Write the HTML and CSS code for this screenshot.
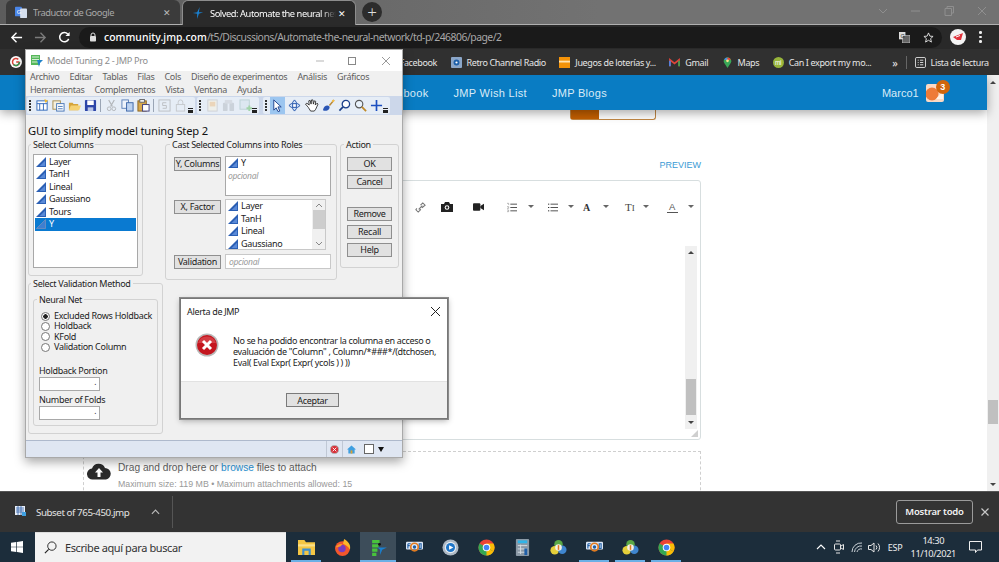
FILE: index.html
```html
<!DOCTYPE html>
<html lang="es">
<head>
<meta charset="utf-8">
<title>Solved: Automate the neural network</title>
<link rel="stylesheet" href="styles.css">
</head>
<body>
<svg class="defs" width="0" height="0" aria-hidden="true">
  <symbol id="col" viewBox="0 0 11 11"><path d="M0 11 L11 0 V11 Z" fill="#2b5fb4"/><path d="M4 10 L10 4 V10 Z" fill="#5a8ad8"/></symbol>
  <symbol id="colw" viewBox="0 0 11 11"><path d="M.5 10.5 L10.5 .5 V10.5 Z" fill="#3f7fd0" stroke="#6c8ebf"/></symbol>
  <symbol id="fsb" viewBox="0 0 18 18"><rect y="3" width="18" height="8" rx="1" fill="#dfe9f6"/><path d="M2 5 H5 M2 7 H4 M2 5 V10 M14 5 H16 V10 H14 Z" fill="none" stroke="#1e5fa8" stroke-width="1.2"/><circle cx="9" cy="8.5" r="4" fill="none" stroke="#e07b20" stroke-width="1.8"/><circle cx="9" cy="8.500" r="1.800" fill="#1e5fa8"/></symbol>
  <symbol id="mt4" viewBox="0 0 18 18"><circle cx="9" cy="5.5" r="4.5" fill="#5aa845"/><circle cx="5" cy="12" r="4.5" fill="#e4cf3a"/><circle cx="13" cy="11.5" r="4.5" fill="#3f86d0"/><circle cx="9" cy="9" r="3.5" fill="#f4f1e4"/><rect x="8.2" y="6.500" width="1.600" height="5" fill="#e07b20"/></symbol>
  <symbol id="chrome" viewBox="0 0 18 18"><circle cx="9" cy="9" r="8.5" fill="#ea4335"/><path d="M9 9 L16.4 13.2 A8.5 8.5 0 0 0 16.4 4.8 L9 4.8 Z" fill="#fbbc05"/><path d="M9 9 L16.4 13.2 A8.5 8.5 0 0 1 1.600 4.800 Z" fill="#34a853"/><path d="M9 9 L16.4 13.2 A8.5 8.5 0 0 1 9 17.5 Z" fill="#fbbc05"/><circle cx="9" cy="9" r="4" fill="#fff"/><circle cx="9" cy="9" r="3" fill="#4285f4"/></symbol>
</svg>
<div class="desktop">
  <div class="browser">
    <div class="tabstrip">
      <div class="tab tab-off">
        <svg class="ico14" viewBox="0 0 14 14"><rect x="0" y="1" width="8" height="11" rx="1" fill="#4a86e8"/><rect x="6" y="3" width="8" height="11" rx="1" fill="#d5dfee"/><text x="2" y="9" font-size="7" fill="#fff" font-family="Liberation Sans">G</text></svg>
        <span class="tab-title">Traductor de Google</span><span class="tab-x">✕</span>
      </div>
      <div class="tab tab-on">
        <svg class="ico14" viewBox="0 0 14 14"><path d="M1 7 L6 6 L9 0 L8 6 L13 6 L8 8 L6 14 L6 8 Z" fill="#1a80d0"/></svg>
        <span class="tab-title tab-fade">Solved: Automate the neural netw</span><span class="tab-x tab-x-on">✕</span>
      </div>
      <div class="newtab">+</div>
      <div class="winbtns">
        <svg width="12" height="12" viewBox="0 0 12 12"><path d="M2 4 L6 8 L10 4" fill="none" stroke="#8f8f8f"/></svg>
        <svg width="12" height="12" viewBox="0 0 12 12"><path d="M1 6 H10" stroke="#8f8f8f"/></svg>
        <svg width="12" height="12" viewBox="0 0 12 12"><path d="M2 3.5 H8.5 V10.5 H2 Z M4 3 V1.5 H10.5 V8 H9" fill="none" stroke="#8f8f8f"/></svg>
        <svg width="12" height="12" viewBox="0 0 12 12"><path d="M2 2 L10 10 M10 2 L2 10" stroke="#8f8f8f"/></svg>
      </div>
    </div>
    <div class="toolbar">
      <svg class="nav-ico" viewBox="0 0 14 14"><path d="M13 7 H2 M7 2 L2 7 L7 12" fill="none" stroke="#fff" stroke-width="1.5"/></svg>
      <svg class="nav-ico" viewBox="0 0 14 14"><path d="M1 7 H12 M7 2 L12 7 L7 12" fill="none" stroke="#7b7b7b" stroke-width="1.5"/></svg>
      <svg class="nav-ico" viewBox="0 0 14 14"><path d="M11.5 8.5 A5 5 0 1 1 10.5 3.2" fill="none" stroke="#fff" stroke-width="1.6"/><path d="M12.5 1 V5.5 H8 Z" fill="#fff"/></svg>
      <div class="omnibox">
        <svg class="lock" viewBox="0 0 8 10"><path d="M2 4 V3 A2 2 0 0 1 6 3 V4" fill="none" stroke="#ddd"/><rect x="1" y="4" width="6" height="5.5" rx=".8" fill="#ddd"/></svg>
        <span class="url"><b>community.jmp.com</b>/t5/Discussions/Automate-the-neural-network/td-p/246806/page/2</span>
        <svg class="omni-ico" viewBox="0 0 12 12"><rect x="0" y="0" width="7" height="8" fill="#ddd"/><rect x="4" y="4" width="8" height="8" fill="#666" stroke="#ddd" stroke-width=".6"/><text x="1.5" y="6.5" font-size="6" fill="#333" font-family="Liberation Sans">G</text></svg>
        <svg class="omni-ico omni-star" viewBox="0 0 12 12"><path d="M6 1 L7.5 4.5 L11 4.8 L8.3 7.2 L9.2 11 L6 9 L2.8 11 L3.7 7.2 L1 4.8 L4.5 4.5 Z" fill="none" stroke="#e6e6e6"/></svg>
      </div>
      <svg class="avatar" viewBox="0 0 16 16"><circle cx="8" cy="8" r="8" fill="#f4f4f4"/><path d="M3 8 L13 4 L11 11 L7 11 Z" fill="#e0313a"/><path d="M6 8 L10 6.5" stroke="#fff"/></svg>
      <div class="kebab"><i></i><i></i><i></i></div>
    </div>
    <div class="bookmarks">
      <svg class="bm-g" viewBox="0 0 12 12"><circle cx="6" cy="6" r="6" fill="#fff"/><path d="M9.5 6 H6.2 M9.5 6 A3.5 3.5 0 1 1 8.3 3.4" fill="none" stroke="#d8443a" stroke-width="1.5"/><path d="M9.5 6 A3.5 3.5 0 0 1 3.5 8.5" fill="none" stroke="#2f9e55" stroke-width="1.5"/></svg>
      <span class="bm bm-first">Facebook</span>
      <span class="bm bm-item"><svg class="bm-ico" viewBox="0 0 12 12"><rect width="12" height="12" rx="1" fill="#8ba6c8"/><circle cx="6" cy="6" r="3.2" fill="#1d5fa8"/><circle cx="6" cy="6" r="1.2" fill="#fff"/></svg>Retro Channel Radio</span>
      <span class="bm bm-item"><svg class="bm-ico" viewBox="0 0 12 12"><rect width="12" height="12" fill="#f39208"/><rect y="4" width="12" height="2" fill="#ffe3b0"/></svg>Juegos de loterías y...</span>
      <span class="bm bm-item"><svg class="bm-ico" viewBox="0 0 12 10"><path d="M1 9 V2 L6 6 L11 2 V9" fill="none" stroke="#e0443a" stroke-width="1.8"/><path d="M1 9 V3" stroke="#4a86e8" stroke-width="1.8"/><path d="M11 9 V3" stroke="#38a853" stroke-width="1.8"/></svg>Gmail</span>
      <span class="bm bm-item"><svg class="bm-ico" viewBox="0 0 10 13"><path d="M5 13 L1.2 7 A4.4 4.4 0 1 1 8.8 7 Z" fill="#3aa757"/><path d="M1 3 A4.4 4.4 0 0 1 5 .5 L5 4 Z" fill="#4a86e8"/><path d="M9 3 A4.4 4.4 0 0 0 5 .5 L5 4 Z" fill="#ea4335"/><circle cx="5" cy="4.5" r="1.6" fill="#fbe18d"/></svg>Maps</span>
      <span class="bm bm-item"><svg class="bm-ico" viewBox="0 0 12 12"><circle cx="6" cy="6" r="6" fill="#97b43a"/><text x="2.3" y="8.5" font-size="7" fill="#fff" font-family="Liberation Sans">mi</text></svg>Can I export my mo...</span>
      <span class="bm bm-more">»</span>
      <span class="bm-sep"></span>
      <span class="bm bm-read"><svg class="bm-ico" viewBox="0 0 12 12"><rect x=".5" y=".5" width="11" height="11" rx="1.5" fill="none" stroke="#e3e3e3"/><path d="M3 3.5 H4 M5.5 3.5 H9 M3 6 H4 M5.5 6 H9 M3 8.5 H4 M5.5 8.5 H9" stroke="#e3e3e3"/></svg>Lista de lectura</span>
    </div>
    <div class="page">
      <div class="pagemain">
        <nav class="sitenav">
          <span class="nav-link nav-first">Notebook</span>
          <span class="nav-link">JMP Wish List</span>
          <span class="nav-link">JMP Blogs</span>
          <span class="nav-user">Marco1</span>
          <span class="nav-avatar">
            <svg width="18" height="18" viewBox="0 0 18 18"><rect width="18" height="18" rx="2" fill="#fbd9c4"/><circle cx="6" cy="10" r="6.5" fill="#ee7b38"/><path d="M10 15 L17 7 V15 Z" fill="#fff3e8"/></svg>
            <span class="badge">3</span>
          </span>
        </nav>
        <div class="content">
          <div class="cta"><span class="cta-a"></span><span class="cta-b"></span></div>
          <div class="preview">PREVIEW</div>
          <div class="editor">
            <div class="editor-tools">
              <svg class="ed" viewBox="0 0 12 12"><path d="M2 7 L1 8.5 L3.5 11 L6 8.5 L5 7.5 M7 5 L8 6 L11 3.5 L8.5 1 L6 3.5 M4 8 L8 4" fill="none" stroke="#777" stroke-width="1.2"/></svg>
              <svg class="ed ed-cam" viewBox="0 0 12 10"><path d="M0 2 H3 L4 0 H8 L9 2 H12 V10 H0 Z" fill="#222"/><circle cx="6" cy="5.5" r="2.3" fill="#fff"/><circle cx="6" cy="5.5" r="1.2" fill="#222"/></svg>
              <svg class="ed ed-vid" viewBox="0 0 12 8"><rect width="8" height="8" rx="1" fill="#222"/><path d="M8 3 L12 .5 V7.5 L8 5 Z" fill="#222"/></svg>
              <svg class="ed ed-ol" viewBox="0 0 12 12"><path d="M4 2 H12 M4 6 H12 M4 10 H12" stroke="#555" stroke-width="1.2"/><path d="M0 1 H2 V3 M0 5 H2 V7 H0 M0 9 H2 V11 H0" fill="none" stroke="#888" stroke-width=".7"/></svg><i class="caret caret-ol"></i>
              <svg class="ed ed-ul" viewBox="0 0 12 12"><path d="M3 2 H12 M3 6 H12 M3 10 H12" stroke="#555" stroke-width="1.2"/><path d="M0 2 H1.5 M0 6 H1.5 M0 10 H1.5" stroke="#333" stroke-width="1.2"/></svg><i class="caret caret-ul"></i>
              <span class="ed-a">A</span><i class="caret caret-a"></i>
              <span class="ed-t">T<small>I</small></span><i class="caret caret-t"></i>
              <span class="ed-c">A</span><i class="caret caret-c"></i>
            </div>
            <div class="ed-scroll"><i class="up"></i><span class="ed-thumb"></span><i class="down"></i></div>
            <svg class="grip" viewBox="0 0 7 7"><path d="M0 7 L7 0 V7 Z" fill="#cfcfcf"/></svg>
          </div>
          <div class="drop">
            <svg class="cloud" viewBox="0 0 24 18"><path d="M6 17.5 A5.5 5.5 0 0 1 5 6.5 A7 7 0 0 1 18 6 A5.8 5.8 0 0 1 19 17.5 Z" fill="#2b2b2b"/><path d="M12 6 L16 10.5 H13.5 V15 H10.5 V10.5 H8 Z" fill="#fff"/></svg>
            <div>
              <div class="drop-main">Drag and drop here or <span class="link">browse</span> files to attach</div>
              <div class="drop-sub">Maximum size: 119 MB • Maximum attachments allowed: 15</div>
            </div>
          </div>
        </div>
      </div>
      <div class="pagescroll"><i class="up"></i><span class="page-thumb"></span><i class="down"></i></div>
    </div>
    <div class="downloads">
      <svg class="dl-ico" viewBox="0 0 11 10"><rect width="10" height="9" fill="#e8eef8"/><path d="M1 2 H9 M1 4 H9 M1 6 H9 M3 0 V9 M6 0 V9" stroke="#3060a8" stroke-width=".8"/><rect x="7" y="6" width="4" height="4" fill="#3f9fe0"/></svg>
      <span class="dl-name">Subset of 765-450.jmp</span>
      <svg class="dl-chev" viewBox="0 0 10 6"><path d="M1 5 L5 1 L9 5" fill="none" stroke="#bbb" stroke-width="1.3"/></svg>
      <span class="dl-sep"></span>
      <span class="dl-all">Mostrar todo</span>
      <svg class="dl-x" viewBox="0 0 8 8"><path d="M.5 .5 L7.5 7.5 M7.5 .5 L.5 7.5" stroke="#c8c8c8" stroke-width="1.2"/></svg>
    </div>
  </div>

  <div class="taskbar">
    <svg class="start" viewBox="0 0 12 12"><path d="M0 1.8 L5.3 1 V5.7 H0 Z M6 .9 L12 0 V5.7 H6 Z M0 6.3 H5.3 V11 L0 10.2 Z M6 6.3 H12 V12 L6 11.1 Z" fill="#fff"/></svg>
    <div class="search">
      <svg class="mag" viewBox="0 0 14 14"><circle cx="8.5" cy="5.5" r="4.5" fill="none" stroke="#222"/><path d="M5 9 L1 13" stroke="#222" stroke-width="1.3"/></svg>
      <span>Escribe aquí para buscar</span>
    </div>
    <div class="tb-apps">
      <span class="app app-on-line"><svg viewBox="0 0 16 16"><path d="M0 1 H6 L7.5 3 H16 V15 H0 Z" fill="#f4c644"/><path d="M0 5 H16 V7 H0 Z" fill="#fbe08a"/><path d="M4 9 H12 V15 H10 V11 H6 V15 H4 Z" fill="#3d8fd0"/></svg></span>
      <span class="app"><svg viewBox="0 0 16 16"><circle cx="8" cy="9" r="7" fill="#f3572c"/><path d="M9.500 0 C14 2.500 16 6 15 10 C13.500 7 11 5.500 8.500 4.500 Z" fill="#fcb72a"/><circle cx="7.500" cy="9" r="3.500" fill="#7a3cc0"/><path d="M1.500 8 C3 5 6 4 8 5 L6 7 Z" fill="#f89a2c"/></svg></span>
      <span class="app app-active"><svg viewBox="0 0 16 16"><path d="M2 1 H9 V4 H2 Z M2 5 H8 V8 H2 Z M2 9 H7 V12 H2 Z M2 13 H6 V16 H2 Z" fill="#48c33c"/><circle cx="9" cy="5" r="1.300" fill="#111"/><path d="M7 8 H16 L11.500 10 L9.500 15 L9.500 10 Z" fill="#1a80d0"/></svg></span>
      <span class="app"><svg><use href="#fsb"/></svg></span>
      <span class="app"><svg viewBox="0 0 18 18"><circle cx="9" cy="9" r="8.5" fill="#aeb9c4"/><circle cx="9" cy="9" r="6" fill="#e8edf2"/><circle cx="9" cy="9" r="4.800" fill="#1f76c8"/><path d="M7.500 6.500 L12 9 L7.500 11.500 Z" fill="#fff"/></svg></span>
      <span class="app"><svg><use href="#chrome"/></svg></span>
      <span class="app"><svg viewBox="0 0 14 18"><rect width="14" height="18" rx="1" fill="#8a99a6"/><rect x="2" y="1.5" width="10" height="3" fill="#2fb4e8"/><path d="M2 7 H12 M2 10.5 H12 M2 14 H12 M5 6 V16" stroke="#d5dde4"/><rect x="9" y="10" width="3" height="7" fill="#1e5fa8"/></svg></span>
      <span class="app"><svg><use href="#mt4"/></svg></span>
      <span class="app app-on-line"><svg><use href="#fsb"/></svg></span>
      <span class="app app-on-line"><svg><use href="#mt4"/></svg></span>
      <span class="app app-on-line"><svg><use href="#chrome"/></svg></span>
    </div>
    <div class="tray">
      <svg class="tr-up" width="10" height="6" viewBox="0 0 10 6"><path d="M1 5 L5 1 L9 5" fill="none" stroke="#fff" stroke-width="1.1"/></svg>
      <svg class="tr-meet" width="10" height="14" viewBox="0 0 10 14"><rect x=".5" y="4" width="6" height="6" rx="1" fill="none" stroke="#e6e6e6"/><path d="M7 6 L9.5 4.5 V9.5 L7 8 M2 1 H6 M2 13 H6" fill="none" stroke="#e6e6e6"/></svg>
      <svg class="tr-wifi" width="12" height="11" viewBox="0 0 12 11"><path d="M1 10 A9 9 0 0 1 11 1 M3.5 10 A6.5 6.5 0 0 1 11 4 M6 10 A4 4 0 0 1 11 7" fill="none" stroke="#c9d0d6"/></svg>
      <svg class="tr-vol" width="12" height="11" viewBox="0 0 12 11"><path d="M.5 3.5 H3 L6 1 V10 L3 7.5 H.5 Z M8 3.5 A3 3 0 0 1 8 7.5 M10 1.5 A6 6 0 0 1 10 9.5" fill="none" stroke="#e6e6e6"/></svg>
      <span class="esp">ESP</span>
      <span class="clock"><span>14:30</span><span>11/10/2021</span></span>
      <svg class="notif" width="13" height="12" viewBox="0 0 13 12"><path d="M.5 .5 H12.5 V9 H8.5 L6.5 11.5 L6.5 9 H.5 Z" fill="none" stroke="#f0f0f0"/></svg>
    </div>
  </div>

  <section class="jmp">
    <header class="jmp-title">
      <svg class="jmp-logo" viewBox="0 0 13 13"><rect x="1" y="1" width="9" height="10" fill="#56b85a"/><path d="M2 3 H9 M2 5.5 H9 M2 8 H9" stroke="#d6f0d6"/><path d="M7 6 H13 L10 9 L9 13 Z" fill="#2183c9"/></svg>
      <span class="jmp-name">Model Tuning 2 - JMP Pro</span>
      <svg class="jw jw-min" viewBox="0 0 10 10"><path d="M1 5 H9" stroke="#b5b5b5"/></svg>
      <svg class="jw jw-max" viewBox="0 0 10 10"><rect x="1.5" y="1.5" width="7" height="7" fill="none" stroke="#888"/></svg>
      <svg class="jw jw-x" viewBox="0 0 10 10"><path d="M1 1 L9 9 M9 1 L1 9" stroke="#999"/></svg>
    </header>
    <div class="jmp-menu">
      <div class="menu-row"><span>Archivo</span><span>Editar</span><span>Tablas</span><span>Filas</span><span>Cols</span><span>Diseño de experimentos</span><span>Análisis</span><span>Gráficos</span></div>
      <div class="menu-row"><span>Herramientas</span><span>Complementos</span><span>Vista</span><span>Ventana</span><span>Ayuda</span></div>
    </div>
    <div class="jmp-tools">
      <div class="tgroup tg1">
        <i class="tgrip"></i>
        <svg class="ti" viewBox="0 0 14 14"><rect x="1" y="2" width="11" height="10" fill="#fff" stroke="#2f66b8"/><path d="M1 5 H12 M4 5 V12 M8 5 V12" stroke="#2f66b8"/><path d="M9 0 L13 2 L10 4 Z" fill="#f1b92c"/></svg>
        <svg class="ti" viewBox="0 0 14 14"><rect x="1" y="2" width="8" height="9" fill="#f5f0df" stroke="#a58b4d"/><rect x="5" y="5" width="8" height="8" fill="#fff" stroke="#4373b5"/><path d="M6.5 8 H11.5 M6.5 10.5 H11.5" stroke="#4373b5"/></svg>
        <svg class="ti" viewBox="0 0 14 14"><path d="M1 4 H5 L6 5.5 H11 V12 H1 Z" fill="#d5a43a"/><path d="M3 7 H14 L12 12 H1 Z" fill="#f5d274"/></svg>
        <svg class="ti" viewBox="0 0 14 14"><rect x="1" y="1" width="12" height="12" rx="1" fill="#2c45a8"/><rect x="3.5" y="1.5" width="7" height="5" fill="#fff"/><rect x="4" y="9" width="6" height="4" fill="#b8c4e6"/></svg>
        <i class="tsep"></i>
        <svg class="ti ti-dim" viewBox="0 0 14 14"><path d="M4 1 L8 8 M10 1 L6 8" stroke="#888" stroke-width="1.3"/><circle cx="4.5" cy="10.5" r="2" fill="none" stroke="#888"/><circle cx="9.5" cy="10.5" r="2" fill="none" stroke="#888"/></svg>
        <svg class="ti" viewBox="0 0 14 14"><rect x="1" y="1" width="7" height="9" fill="#eef3fb" stroke="#5a7fb8"/><rect x="6" y="4" width="7" height="9" fill="#bcd2f0" stroke="#3a65a8"/></svg>
        <svg class="ti" viewBox="0 0 14 14"><rect x="1" y="2" width="9" height="11" fill="#d9a94c" stroke="#8a6420"/><rect x="3" y="0.5" width="5" height="3" fill="#eee" stroke="#666"/><rect x="6" y="6" width="7" height="7" fill="#fff" stroke="#3a3a7a"/></svg>
        <i class="tsep"></i>
        <svg class="ti ti-dim" viewBox="0 0 14 14"><rect x="1" y="1" width="12" height="12" fill="none" stroke="#999"/><path d="M9 4 H5 V7 H9 V10 H5" fill="none" stroke="#999"/></svg>
        <svg class="ti ti-dim" viewBox="0 0 14 14"><rect x="2.5" y="6" width="9" height="7" fill="none" stroke="#aaa"/><path d="M4.5 6 V3.5 A2.5 2.5 0 0 1 9.5 3.5 V6" fill="none" stroke="#aaa"/></svg>
        <i class="tmore"></i>
      </div>
      <div class="tgroup tg2">
        <i class="tgrip"></i>
        <svg class="ti ti-dim" viewBox="0 0 14 14"><rect x="2" y="1" width="10" height="12" fill="#f6f2e2" stroke="#bbb"/><rect x="4" y="3" width="6" height="5" fill="#f0c38a"/></svg>
        <svg class="ti ti-dim" viewBox="0 0 14 14"><rect x="1" y="4" width="5" height="9" rx="1" fill="#b6bcc4"/><rect x="8" y="4" width="5" height="9" rx="1" fill="#b6bcc4"/><rect x="3" y="1" width="8" height="4" fill="#c9ced4"/></svg>
        <svg class="ti ti-dim ti-wide" viewBox="0 0 16 14"><rect x="1" y="1" width="10" height="10" fill="#d5e3ee" stroke="#9bb"/><path d="M11 7 V13 M8 10 H14" stroke="#6cc06c" stroke-width="2"/></svg>
        <i class="tmore"></i>
      </div>
      <div class="tgroup tg3">
        <i class="tgrip"></i>
        <span class="ti-sel"><svg class="ti" viewBox="0 0 14 14"><path d="M3 1 L11 8.5 H7.5 L9.5 13 L7.5 13.5 L5.5 9.5 L3 12 Z" fill="#fff" stroke="#1c3f8a"/></svg></span>
        <svg class="ti" viewBox="0 0 14 14"><path d="M7 1 L9 3.5 V5 H10.5 L13 7 L10.5 9 H9 V10.5 L7 13 L5 10.5 V9 H3.5 L1 7 L3.5 5 H5 V3.5 Z" fill="#cfe0f8" stroke="#1c4fa8"/><path d="M5 5 H9 V9 H5 Z" fill="#fff" stroke="#1c4fa8"/></svg>
        <svg class="ti ti-hand" viewBox="0 0 16 14"><path d="M4 9 L1 5.5 L2.5 4.5 L5 6.5 L4.5 2 L6 1.5 L7 5.5 L7.5 1 L9 1 L9.5 5.5 L10.5 2 L12 2.5 L11.5 6.5 L13.5 4.5 L14.5 5.5 L12 11 L10.5 13 H6.5 Z" fill="#fff" stroke="#222" stroke-width=".9"/></svg>
        <svg class="ti" viewBox="0 0 14 14"><path d="M1 12 C2 7 6 6 8 8 C9 11 5 14 1 12 Z" fill="#2a55b4"/><path d="M8 7 L13 1" stroke="#b98a3a" stroke-width="1.6"/><circle cx="12" cy="2" r="1.3" fill="#f5c04a"/></svg>
        <svg class="ti" viewBox="0 0 14 14"><circle cx="8.5" cy="5.5" r="4" fill="#fff" stroke="#1c3f8a" stroke-width="1.4"/><path d="M5.5 8.5 L1.5 12.5" stroke="#1c3f8a" stroke-width="1.8"/></svg>
        <svg class="ti" viewBox="0 0 14 14"><circle cx="5.5" cy="5.5" r="4" fill="#e9f2fb" stroke="#555" stroke-width="1.2"/><path d="M8.5 8.5 L13 13" stroke="#c08a2a" stroke-width="2"/></svg>
        <svg class="ti" viewBox="0 0 14 14"><path d="M7 1 V13 M1 7 H13" stroke="#1c4fc0" stroke-width="1.8"/></svg>
        <i class="tmore"></i>
      </div>
    </div>
    <div class="jmp-body">
      <h2 class="jmp-h">GUI to simplify model tuning Step 2</h2>
      <div class="jmp-top">
        <fieldset class="grp grp-sel">
          <legend>Select Columns</legend>
          <ul class="list list-sel">
            <li><svg class="c"><use href="#col"/></svg>Layer</li>
            <li><svg class="c"><use href="#col"/></svg>TanH</li>
            <li><svg class="c"><use href="#col"/></svg>Lineal</li>
            <li><svg class="c"><use href="#col"/></svg>Gaussiano</li>
            <li><svg class="c"><use href="#col"/></svg>Tours</li>
            <li class="on"><svg class="c"><use href="#colw"/></svg>Y</li>
          </ul>
        </fieldset>
        <fieldset class="grp grp-cast">
          <legend>Cast Selected Columns into Roles</legend>
          <div class="cast-row">
            <span class="btn btn-role">Y, Columns</span>
            <ul class="list list-y">
              <li><svg class="c"><use href="#col"/></svg>Y</li>
              <li class="opt">opcional</li>
            </ul>
          </div>
          <div class="cast-row cast-x">
            <span class="btn btn-role">X, Factor</span>
            <div class="list list-x">
              <ul>
                <li><svg class="c"><use href="#col"/></svg>Layer</li>
                <li><svg class="c"><use href="#col"/></svg>TanH</li>
                <li><svg class="c"><use href="#col"/></svg>Lineal</li>
                <li><svg class="c"><use href="#col"/></svg>Gaussiano</li>
              </ul>
              <div class="x-scroll"><svg width="8" height="5" viewBox="0 0 8 5"><path d="M1 4 L4 1 L7 4" fill="none" stroke="#888"/></svg><span></span><svg width="8" height="5" viewBox="0 0 8 5"><path d="M1 1 L4 4 L7 1" fill="none" stroke="#888"/></svg></div>
            </div>
          </div>
          <div class="cast-row cast-last">
            <span class="btn btn-role">Validation</span>
            <div class="list list-v"><span class="opt">opcional</span></div>
          </div>
        </fieldset>
        <fieldset class="grp grp-act">
          <legend>Action</legend>
          <span class="btn">OK</span>
          <span class="btn">Cancel</span>
          <span class="btn btn-gap">Remove</span>
          <span class="btn">Recall</span>
          <span class="btn">Help</span>
        </fieldset>
      </div>
      <fieldset class="grp grp-val">
        <legend>Select Validation Method</legend>
        <fieldset class="grp grp-nn">
          <legend>Neural Net</legend>
          <div class="radio radio-on"><i></i>Excluded Rows Holdback</div>
          <div class="radio"><i></i>Holdback</div>
          <div class="radio"><i></i>KFold</div>
          <div class="radio"><i></i>Validation Column</div>
          <div class="fld fld-first">Holdback Portion</div>
          <div class="num"><b>.</b></div>
          <div class="fld">Number of Folds</div>
          <div class="num"><b>.</b></div>
        </fieldset>
      </fieldset>
    </div>
    <footer class="jmp-status">
      <span class="st-sep"></span>
      <svg class="st" viewBox="0 0 10 10"><circle cx="5" cy="5" r="4.5" fill="#d8303a"/><circle cx="5" cy="5" r="4.5" fill="none" stroke="#b0b0b0"/><path d="M3 3 L7 7 M7 3 L3 7" stroke="#fff"/></svg>
      <span class="st-sep st-sep2"></span>
      <svg class="st" viewBox="0 0 10 10"><path d="M5 .5 L10 5 H8.5 V9.5 H1.5 V5 H0 Z" fill="#3f9fe0"/><rect x="4" y="6" width="2" height="3.5" fill="#e0a030"/></svg>
      <span class="st-box"></span>
      <span class="st-arrow"></span>
    </footer>
  </section>

  <section class="alert">
    <header class="alert-title"><span>Alerta de JMP</span><svg width="11" height="11" viewBox="0 0 11 11"><path d="M1 1 L10 10 M10 1 L1 10" stroke="#222"/></svg></header>
    <div class="alert-body">
      <svg class="err" viewBox="0 0 24 24"><circle cx="12" cy="12" r="11.5" fill="#b9b9b9"/><circle cx="12" cy="12" r="10" fill="#c4161f"/><path d="M3 10 A9.5 9.5 0 0 1 21 10 Z" fill="#e0565c" opacity=".6"/><path d="M8 8 L16 16 M16 8 L8 16" stroke="#fff" stroke-width="3"/></svg>
      <p>No se ha podido encontrar la columna en acceso o evaluación de "Column" , Column/*###*/(dtchosen, Eval( Eval Expr( Expr( ycols ) ) ))</p>
    </div>
    <footer class="alert-foot"><span class="alert-ok">Aceptar</span></footer>
  </section>
</div>
</body>
</html>
```

FILE: styles.css
```css
* { box-sizing: border-box; }
html, body { margin: 0; padding: 0; }
body { font-family: "Noto Sans", "Liberation Sans", sans-serif; }
.defs { position: absolute; }
ul { list-style: none; margin: 0; padding: 0; }
svg { display: block; flex: none; }
.desktop { position: relative; width: 999px; height: 562px; overflow: hidden; display: flex; flex-direction: column; background: #1c2d3b; }
.browser { height: 532px; display: flex; flex-direction: column; }

/* tab strip */
.tabstrip { height: 25px; flex: none; display: flex; align-items: flex-end; padding-left: 6px; background: linear-gradient(90deg, #5c5c5c, #727272 60%); border-bottom: 1px solid #b0b0b0; }
.tab { height: 24px; width: 174px; display: flex; align-items: center; padding: 0 9px; border-radius: 6px 6px 0 0; font-size: 9.3px; letter-spacing: -.45px; }
.tab-off { background: #3b3b3b; color: #a9a9a9; margin-right: 2px; }
.tab-on { background: #2a2a2a; color: #fff; border: 1px solid #8d8d8d; border-bottom: 0; margin-bottom: -1px; height: 25px; }
.ico14 { width: 12px; height: 12px; margin: 0 6px 0 0; }
.tab-title { flex: 1; white-space: nowrap; overflow: hidden; }
.tab-fade { -webkit-mask-image: linear-gradient(90deg, #000 88%, transparent); mask-image: linear-gradient(90deg, #000 88%, transparent); margin-right: 2px; }
.tab-x { font-size: 9px; color: #bbb; }
.tab-x-on { color: #fff; }
.newtab { width: 20px; height: 20px; margin: 0 0 2px 6px; border-radius: 50%; background: #2c2c2c; color: #ddd; font-size: 17px; line-height: 19px; text-align: center; font-weight: 300; }
.winbtns { margin-left: auto; display: flex; gap: 21px; padding: 0 11px 7px 0; }

/* toolbar */
.toolbar { height: 24px; flex: none; display: flex; align-items: center; padding-left: 10px; background: #292929; }
.nav-ico { width: 13px; height: 13px; margin-right: 11px; }
.omnibox { width: 863px; height: 21px; margin-left: -3px; border-radius: 11px; background: #1a1a1a; display: flex; align-items: center; padding-left: 10px; }
.lock { width: 8px; height: 10px; margin-right: 7px; }
.url { flex: 1; font-size: 10.4px; color: #a8a8a8; white-space: nowrap; letter-spacing: -.5px; }
.url b { color: #fff; font-weight: 500; letter-spacing: .05px; }
.omni-ico { width: 11px; height: 11px; }
.omni-star { margin: 0 8px 0 13px; }
.avatar { width: 16px; height: 16px; margin-left: 8px; }
.kebab { display: flex; flex-direction: column; gap: 2px; margin-left: 13px; }
.kebab i { width: 2.5px; height: 2.5px; border-radius: 50%; background: #eee; }

/* bookmarks */
.bookmarks { height: 26px; flex: none; display: flex; align-items: center; padding-left: 10px; background: #303030; color: #e6e6e6; font-size: 9px; letter-spacing: -.37px; }
.bm-g { width: 12px; height: 12px; }
.bm { white-space: nowrap; display: flex; align-items: center; flex: none; }
.bm-first { margin-left: 350px; width: 65px; justify-content: flex-end; }
.bm-item { margin-left: 13.5px; }
.bm-ico { width: 11px; height: 11px; margin-right: 5px; }
.bm-more { margin-left: 21px; font-size: 11px; }
.bm-sep { width: 1px; height: 13px; background: #666; margin: 0 8px 0 8px; }

/* page */
.page { flex: 1; min-height: 0; display: flex; background: #fff; overflow: hidden; }
.pagemain { flex: 1; display: flex; flex-direction: column; font-family: "Liberation Sans", sans-serif; min-width: 0; }
.sitenav { height: 35px; flex: none; display: flex; align-items: center; background: #097cc3; color: #d9ebf7; font-size: 11px; letter-spacing: .3px; padding: 0 0 0 379px; box-shadow: 0 3px 10px rgba(0,0,0,.35); position: relative; z-index: 1; }
.nav-link { margin-right: 25px; }
.nav-user { margin-left: 250px; letter-spacing: 0; }
.nav-avatar { position: relative; margin-left: 7px; }
.badge { position: absolute; left: 10px; top: -4px; width: 14px; height: 14px; border-radius: 50%; background: #d0650c; color: #fff; font-size: 9px; font-weight: 700; line-height: 14px; text-align: center; letter-spacing: 0; }
.content { flex: 1; padding-left: 83px; position: relative; min-height: 0; }
.cta { position: absolute; left: 570px; top: 0; width: 86px; height: 10px; display: flex; border: 1px solid #c28845; border-top: 0; border-radius: 0 0 3px 3px; }
.cta-a { width: 28px; background: #c35f00; }
.preview { width: 618px; text-align: right; padding-top: 50px; font-size: 9px; line-height: 11px; color: #3a9bd5; height: 70px; }
.editor { position: relative; width: 618px; height: 260px; border: 1px solid #d7dedf; border-radius: 3px; }
.editor-tools { display: flex; align-items: center; height: 52px; padding-left: 331px; }
.ed { width: 11px; height: 11px; }
.ed-cam { margin-left: 15px; width: 12px; height: 10px; }
.ed-vid { margin-left: 20px; width: 11px; height: 8px; }
.ed-ol { margin-left: 23px; width: 10px; height: 11px; }
.ed-ul { margin-left: 14px; width: 10px; height: 11px; }
.caret { width: 0; height: 0; border: 3px solid transparent; border-top: 3px solid #666; border-bottom: 0; margin-top: -2px; flex: none; }
.caret-ol { margin-left: 11px; }
.caret-ul { margin-left: 10px; }
.ed-a { font: bold 10px "Liberation Serif", serif; color: #333; margin-left: 9px; width: 9px; }
.caret-a { margin-left: 11px; }
.ed-t { font: 11px "Liberation Serif", serif; color: #444; margin-left: 16px; width: 11px; white-space: nowrap; }
.ed-t small { font-size: 9px; }
.caret-t { margin-left: 7px; }
.ed-c { font-size: 9.5px; color: #555; margin-left: 18px; border-bottom: 1px solid #555; padding: 0 2px; line-height: 10px; width: 11px; }
.caret-c { margin-left: 10px; }
.ed-scroll { position: absolute; right: 3px; top: 65px; width: 12px; height: 183px; background: #f0f0f0; display: flex; flex-direction: column; align-items: center; }
.up, .down { width: 0; height: 0; border: 3px solid transparent; flex: none; }
.up { border-top: 0; border-bottom: 3px solid #444; margin-top: 5px; }
.down { border-bottom: 0; border-top: 3px solid #444; margin-bottom: 5px; margin-top: auto; }
.ed-thumb { width: 10px; height: 36px; background: #c0c0c0; margin-top: 125px; }
.grip { position: absolute; right: 2px; bottom: 2px; width: 7px; height: 7px; }
.drop { margin-top: 11px; width: 618px; height: 60px; border: 1px dashed #cfcfcf; display: flex; padding: 9px 0 0 3px; gap: 7px; }
.cloud { width: 24px; height: 18px; margin-top: 1px; }
.drop-main { font-size: 10.2px; line-height: 14px; color: #5f5f5f; }
.link { color: #2a8fd0; }
.drop-sub { font-size: 8.8px; line-height: 10px; color: #999; margin-top: 4px; }
.pagescroll { width: 12px; flex: none; background: #f0f0f0; display: flex; flex-direction: column; align-items: center; }
.page-thumb { width: 10px; height: 24px; background: #c0c0c0; margin-top: 316px; }
.pagescroll .up { margin-top: 6px; }

/* downloads */
.downloads { height: 41px; flex: none; display: flex; align-items: center; background: #333; border-top: 1px solid #555; padding-left: 15px; color: #e4e4e4; }
.dl-ico { width: 11px; height: 10px; margin-top: -3px; }
.dl-name { font-size: 9.8px; letter-spacing: -.45px; margin-left: 10px; width: 114px; white-space: nowrap; }
.dl-chev { width: 9px; height: 6px; margin-left: 1px; }
.dl-sep { width: 1px; height: 32px; background: #555; margin-left: 12px; }
.dl-all { margin-left: 723px; width: 77px; height: 24px; border: 1px solid #9a9a9a; border-radius: 3px; font-size: 9.5px; font-weight: 600; text-align: center; line-height: 22px; color: #f2f2f2; letter-spacing: -.2px; }
.dl-x { width: 8px; height: 8px; margin-left: 8px; }

/* taskbar */
.taskbar { height: 30px; flex: none; display: flex; align-items: stretch; background: #1c2d3b; position: relative; }
.start { width: 12px; height: 12px; margin: 9px 12px 0 11px; }
.search { width: 251px; background: #f2f2f2; display: flex; align-items: center; gap: 8px; padding-left: 9px; font-size: 11px; letter-spacing: -.4px; color: #333; border-top: 1px solid #ddd; }
.mag { width: 13px; height: 13px; }
.tb-apps { display: flex; margin-left: 2px; }
.app { width: 36px; display: flex; align-items: center; justify-content: center; }
.app svg { width: 17px; height: 17px; }
.app-on-line { background: linear-gradient(#6ab0e6, #6ab0e6) center bottom / 30px 2px no-repeat; }
.app-active { background: #3d4d5a; box-shadow: inset 0 -2px 0 #6ab0e6; }
.tray { margin-left: auto; display: flex; align-items: center; color: #eee; padding-right: 17px; }
.tr-meet { margin-left: 8px; }
.tr-wifi { margin-left: 7px; }
.tr-vol { margin-left: 5px; }
.esp { font-size: 9px; letter-spacing: -.2px; margin-left: 8px; }
.clock { display: flex; flex-direction: column; align-items: center; font-size: 9.3px; letter-spacing: -.4px; line-height: 13px; margin-left: 8px; }
.notif { margin-left: 13px; }

/* JMP window */
.jmp { position: absolute; z-index: 2; left: 25px; top: 49px; width: 378px; height: 409px; background: #f0f0f0; border: 1px solid #a9a9a9; box-shadow: 0 4px 10px rgba(0,0,0,.35); display: flex; flex-direction: column; color: #222; font-size: 9px; letter-spacing: -.3px; }
.jmp-title { height: 21px; flex: none; background: #fff; display: flex; align-items: center; padding-left: 4px; color: #8c8c8c; font-size: 9.2px; }
.jmp-logo { width: 13px; height: 13px; margin-right: 4px; }
.jmp-name { flex: 1; }
.jw { width: 10px; height: 10px; }
.jw-max { margin: 0 24px 0 22px; }
.jw-x { margin-right: 11px; }
.jmp-menu { height: 25px; flex: none; padding: 0 0 0 4px; display: flex; flex-direction: column; color: #5e5e5e; font-size: 9px; line-height: 12.5px; }
.menu-row { display: flex; gap: 10px; white-space: nowrap; }
.jmp-tools { height: 19px; flex: none; display: flex; gap: 2px; padding: 1px 12px 1px 1px; background: #ccd7ea; }
.tgroup { display: flex; align-items: center; background: #e6edf6; border-radius: 2px; position: relative; }
.tg1 { width: 168px; padding-left: 2px; }
.tg2 { width: 62px; padding-left: 2px; }
.tg3 { width: 127px; padding-left: 2px; margin-left: 2px; }
.tgrip { width: 2px; height: 11px; margin-right: 3px; background: repeating-linear-gradient(#333 0 1.5px, transparent 1.5px 3px); }
.ti { width: 13px; height: 13px; margin: 0 1.5px; }
.ti-dim { opacity: .55; }
.ti-wide { width: 15px; margin-left: 3px; }
.ti-hand { width: 16px; margin: 0 0 0 2px; }
.ti-sel { display: flex; align-items: center; justify-content: center; width: 15px; height: 17px; background: #9cc6f0; margin-right: 1px; }
.tsep { width: 1px; height: 13px; background: #9aa5b5; margin: 0 2px; }
.tmore { position: absolute; right: 2px; bottom: 1px; width: 5px; height: 5px; border-top: 1px solid #222; border-bottom: 3px solid #222; }
.jmp-body { flex: 1; min-height: 0; padding: 8px 0 0 2px; }
.jmp-h { margin: 0; font-size: 11.2px; font-weight: 400; line-height: 15px; color: #111; white-space: nowrap; height: 16px; letter-spacing: -.2px; }
.jmp-top { display: flex; align-items: flex-start; height: 139px; }
.grp { margin: 0; padding: 0; border: 1px solid #d2d2d2; border-radius: 3px; min-width: 0; }
.grp legend { padding: 0 2px; font-size: 9px; line-height: 11px; color: #222; white-space: nowrap; }
.grp-sel { width: 115px; height: 137px; padding: 4px 4px 0; margin-right: 22px; flex: none; }
.grp-sel legend { margin-left: -2px; }
.grp-cast { width: 172px; height: 141px; padding: 6px 5px 0 8px; margin-right: 3px; flex: none; }
.grp-cast legend { margin-left: -4px; }
.grp-act { width: 59px; height: 129px; padding: 7px 6px 0 6px; display: flex; flex-direction: column; gap: 4px; flex: none; }
.grp-act legend { margin-left: -3px; }
.list { background: #fff; border: 1px solid #a8a8a8; font-size: 9px; line-height: 12.5px; }
.list li { display: flex; align-items: center; height: 12.5px; white-space: nowrap; }
.c { width: 10px; height: 10px; margin: 0 3px 0 1px; }
.list-sel { height: 114px; padding: .5px 1px 0; }
.on { background: #0a7ad1; color: #fff; }
.cast-row { display: flex; gap: 4px; align-items: flex-start; height: 43px; }
.cast-row.cast-x { height: 55px; }
.cast-row.cast-last { height: 20px; }
.btn { display: block; height: 14px; background: #e1e1e1; border: 1px solid #8f8f8f; font-size: 9px; line-height: 12px; text-align: center; color: #222; white-space: nowrap; }
.btn-role { width: 47px; margin-top: 1px; }
.list-y { width: 106px; height: 40px; padding: 0 1px; }
.opt { color: #9a9a9a; font-style: italic; font-size: 8.5px; padding-left: 1px; }
.list-x { width: 101px; height: 51px; padding: 0 0 0 1px; display: flex; justify-content: space-between; border-color: #c8c8c8; }
.x-scroll { width: 13px; background: #f0f0f0; display: flex; flex-direction: column; align-items: center; justify-content: space-between; padding: 3px 0; }
.x-scroll span { width: 12px; height: 19px; background: #cdcdcd; margin: -12px 0 -2px; }
.list-v { width: 106px; height: 15px; padding: 0 2px; border-color: #c8c8c8; line-height: 13px; }
.btn-gap { margin-top: 14px; }
.grp-val { width: 135px; height: 156px; padding: 5px 4px 0; }
.grp-val > legend { margin-left: -2px; }
.grp-nn { height: 132px; padding: 6px 5px 0; }
.grp-nn > legend { margin-left: -2px; }
.radio { display: flex; align-items: center; height: 10.3px; line-height: 10px; gap: 4px; color: #222; white-space: nowrap; padding-left: 2px; }
.radio i { width: 9px; height: 9px; flex: none; border: 1px solid #777; border-radius: 50%; background: #fff; }
.radio-on i { background: radial-gradient(circle, #222 0 2px, #fff 2.5px); }
.fld { line-height: 11px; margin-top: 3px; white-space: nowrap; }
.fld-first { margin-top: 13px; }
.num { width: 61px; height: 14px; background: #fff; border: 1px solid #a8a8a8; margin-top: 1px; text-align: right; padding-right: 3px; line-height: 8px; font-size: 8px; }
.num b { font-weight: 400; }
.jmp-status { height: 17px; flex: none; background: #dfe6f2; border-top: 1px solid #aeb9cc; display: flex; align-items: center; padding-left: 300px; }
.st-sep { width: 1px; height: 16px; background: #c0c8d5; margin-right: 3px; }
.st-sep2 { margin: 0 4px 0 3px; }
.st { width: 9px; height: 9px; }
.st-box { width: 10px; height: 10px; background: #fff; border: 1px solid #666; margin-left: 8px; }
.st-arrow { margin-left: 4px; width: 0; height: 0; border: 3.5px solid transparent; border-top: 5px solid #111; border-bottom: 0; }

/* alert */
.alert { position: absolute; z-index: 3; left: 180px; top: 298px; width: 268px; height: 121px; background: #fff; border: 1px solid #777; box-shadow: 0 0 0 1px #8a8a8a, 0 2px 6px rgba(0,0,0,.3); display: flex; flex-direction: column; font-size: 9px; color: #222; letter-spacing: -.33px; }
.alert-title { height: 24px; flex: none; display: flex; align-items: center; justify-content: space-between; padding: 0 6px; }
.alert-body { flex: 1; display: flex; padding: 8px 8px 0 14px; gap: 14px; }
.err { width: 24px; height: 24px; margin-top: 2px; }
.alert-body p { margin: 0; line-height: 11px; padding-top: 3.5px; }
.alert-foot { height: 37px; flex: none; background: #f0f0f0; border-top: 1px solid #e2e2e2; display: flex; align-items: center; justify-content: center; padding-right: 3px; }
.alert-ok { width: 53px; height: 14px; background: #e1e1e1; border: 1px solid #7a7a7a; text-align: center; line-height: 13px; }
```
